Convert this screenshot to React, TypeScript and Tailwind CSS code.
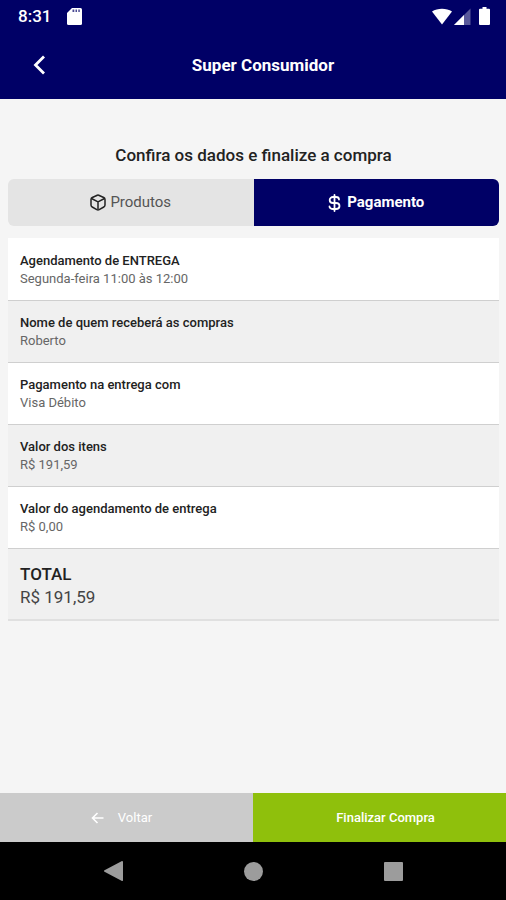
import React from 'react';
import { clsx } from 'clsx';

interface OrderDetail {
  label: string;
  value: string;
}

const details: OrderDetail[] = [
  { label: 'Agendamento de ENTREGA', value: 'Segunda-feira 11:00 às 12:00' },
  { label: 'Nome de quem receberá as compras', value: 'Roberto' },
  { label: 'Pagamento na entrega com', value: 'Visa Débito' },
  { label: 'Valor dos itens', value: 'R$ 191,59' },
  { label: 'Valor do agendamento de entrega', value: 'R$ 0,00' },
];

const StatusBar: React.FC = () => (
  <div className="flex h-8 items-center justify-between pl-[18px] pr-4 text-white">
    <div className="flex items-center gap-4">
      <span className="text-[17px] font-medium leading-5">8:31</span>
      <svg width="15" height="17" viewBox="0 0 15 17" aria-hidden="true">
        <path d="M5 0h8.5A1.5 1.5 0 0 1 15 1.5v14a1.5 1.5 0 0 1-1.5 1.5h-12A1.5 1.5 0 0 1 0 15.500V5z" fill="#fff" />
        <path d="M5.500 1.500h1.800v2.500h-1.800zM8.500 1.500h1.500v2.500h-1.500zM11.300 1.500h1.500v2.500h-1.500z" fill="#000066" opacity=".7" />
      </svg>
    </div>
    <div className="flex items-center">
      <svg width="20" height="17" viewBox="0 0 20 17" aria-hidden="true">
        <path d="M0 3.500C5.500-.2 14.500-.2 20 3.500L10 16.500z" fill="#fff" />
      </svg>
      <svg className="ml-0.5" width="17" height="17" viewBox="0 0 17 17" aria-hidden="true">
        <path d="M16.500 .5v16.500H0z" fill="#fff" opacity=".35" />
        <path d="M10 7v10H0z" fill="#fff" />
      </svg>
      <svg className="ml-2" width="11" height="18" viewBox="0 0 11 18" aria-hidden="true">
        <path d="M3.500 0h4v1.800h2.500a1 1 0 0 1 1 1V17a1 1 0 0 1-1 1H1a1 1 0 0 1-1-1V2.800a1 1 0 0 1 1-1h2.500z" fill="#fff" />
      </svg>
    </div>
  </div>
);

const AndroidNav: React.FC = () => (
  <nav className="flex h-[58px] items-center justify-center gap-[121px] bg-black text-[#9c9c9c]">
    <button type="button" aria-label="Voltar do sistema">
      <svg width="19" height="20" viewBox="0 0 19 20" fill="currentColor">
        <path d="M18 0a1 1 0 0 1 1 1v18a1 1 0 0 1-1.500.8L.5 10.800a1 1 0 0 1 0-1.600L17.500.2z" />
      </svg>
    </button>
    <button type="button" aria-label="Início" className="size-[19px] rounded-full bg-current" />
    <button type="button" aria-label="Recentes" className="size-[19px] rounded-[1px] bg-current" />
  </nav>
);

const App: React.FC = () => {
  return (
    <div className="flex min-h-screen flex-col bg-[#f5f5f5] font-['Roboto',sans-serif] text-[#222222]">
      {/* Header */}
      <header className="bg-[#000066] pb-px text-white">
        <StatusBar />
        <div className="grid h-[66px] grid-cols-[80px_1fr_60px] items-center">
          <button type="button" aria-label="Voltar" className="pl-8">
            <svg width="14" height="20" viewBox="0 0 14 20" fill="none" stroke="currentColor" strokeWidth="2.800">
              <path d="M12 1.500L3.500 10l8.500 8.500" />
            </svg>
          </button>
          <h1 className="text-center text-[17px] font-bold leading-6">Super Consumidor</h1>
        </div>
      </header>

      <main className="flex-1 px-2 pr-[7px] pt-11">
        <h2 className="text-center text-[17px] font-medium leading-6">Confira os dados e finalize a compra</h2>

        {/* Tabs */}
        <div className="mt-3 grid h-[47px] grid-cols-2 overflow-hidden rounded-md" role="tablist">
          <button
            type="button"
            role="tab"
            aria-selected="false"
            className="flex items-center justify-center gap-1 bg-[#e4e4e4] text-[15px] text-[#555555]"
          >
            <svg width="16" height="17" viewBox="0 0 16 17" fill="none" stroke="#222222" strokeWidth="1.500" strokeLinejoin="round">
              <path d="M7.300 1.200q.7-.3 1.400 0l5 2.300q1.300.6 1.300 1.900v5.700q0 1.300-1.200 1.900l-4.600 2.600q-1.200.6-2.400 0l-4.600-2.600Q1 12.400 1 11.100V5.400q0-1.300 1.300-1.900z" />
              <path d="M1.500 4.500L8 7.800l6.500-3.300M8 7.800v8" />
            </svg>
            Produtos
          </button>
          <button
            type="button"
            role="tab"
            aria-selected="true"
            className="flex items-center justify-center gap-1.5 bg-[#000066] text-[15px] font-bold text-white"
          >
            <svg width="13" height="18" viewBox="0 0 13 18" fill="none" stroke="currentColor" strokeWidth="1.800" strokeLinecap="round">
              <path d="M6.500 1v16" />
              <path d="M11 5.500C11 4 9.500 3 8 3H5C3.200 3 1.700 4.200 1.700 6S3.200 9 5 9h3c2 0 3.500 1.200 3.500 3S10 15 8 15H5c-2 0-3.500-1-3.500-2.500" />
            </svg>
            Pagamento
          </button>
        </div>

        {/* Order summary */}
        <dl className="mt-3">
          {details.map((item, i) => (
            <div
              key={item.label}
              className={clsx(
                'border-b border-[#cfcfcf] px-3 pb-3 pt-[13px] text-[13px] leading-[18px]',
                i % 2 === 0 ? 'bg-white' : 'bg-[#f0f0f0]',
                i === 0 && 'pt-[14px]'
              )}
            >
              <dt className="font-medium">{item.label}</dt>
              <dd className="text-[#666666]">{item.value}</dd>
            </div>
          ))}
          <div className="border-b-2 border-[#e0e0e0] bg-[#f0f0f0] px-3 pb-2.5 pt-[14px] leading-[23px]">
            <dt className="text-[17px] font-medium">TOTAL</dt>
            <dd className="text-[17px] text-[#444444]">R$ 191,59</dd>
          </div>
        </dl>
      </main>

      {/* Actions */}
      <div className="grid h-[49px] grid-cols-2 text-[13px] text-white">
        <button type="button" className="flex items-center justify-center gap-[14px] bg-[#cbcbcb] pr-2.5">
          <svg width="13" height="12" viewBox="0 0 13 12" fill="none" stroke="currentColor" strokeWidth="1.600">
            <path d="M12.500 6H1.500M6.500 1l-5 5 5 5" />
          </svg>
          Voltar
        </button>
        <button type="button" className="bg-[#8fc00c] pl-3 font-medium">
          Finalizar Compra
        </button>
      </div>

      <AndroidNav />
    </div>
  );
};

export default App;
